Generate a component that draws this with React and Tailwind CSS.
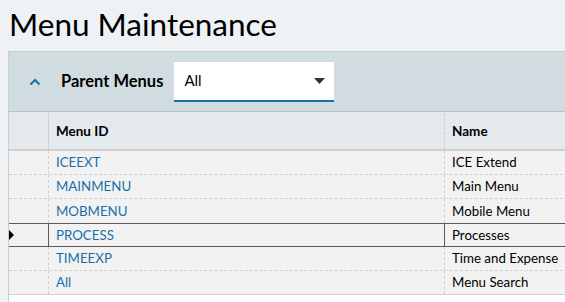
import React from 'react';

const rows = [
    { id: 'ICEEXT', name: 'ICE Extend' },
    { id: 'MAINMENU', name: 'Main Menu' },
    { id: 'MOBMENU', name: 'Mobile Menu' },
    { id: 'PROCESS', name: 'Processes', selected: true },
    { id: 'TIMEEXP', name: 'Time and Expense' },
    { id: 'All', name: 'Menu Search' },
];

export default function App() {
    return (
        <div className="w-[565px] h-[302px] overflow-hidden bg-[#eef2f5] text-[#111]" style={{ fontFamily: 'Lato, "Open Sans", sans-serif' }}>
            <h1 className="h-[51px] pl-[9px] pt-[4px] text-[31.5px] leading-[40px] font-normal text-black">Menu Maintenance</h1>

            <div className="ml-[8px] w-[600px] border-l border-t border-[#c9cdd0] bg-white">
                {/* Panel header */}
                <div className="h-[59px] bg-[#d0dce0] flex items-center">
                    <div className="w-[52px] flex justify-center">
                        <svg width="12" height="8" viewBox="0 0 12 8" fill="none">
                            <path d="M1.5 6.5 L6 2 L10.5 6.5" stroke="#1a6fa8" strokeWidth="2" />
                        </svg>
                    </div>
                    <span className="text-[16.5px] font-bold text-black">Parent Menus</span>
                    <div className="ml-[11px] w-[160px] h-[40px] bg-white border-b-2 border-[#1a6fa8] flex items-center justify-between pl-[10px] pr-[9px]">
                        <span className="text-[15px] text-black">All</span>
                        <svg width="11" height="6" viewBox="0 0 11 6">
                            <path d="M0 0 H11 L5.5 6 Z" fill="#333" />
                        </svg>
                    </div>
                </div>

                {/* Grid */}
                <div className="border-t border-[#b5c1c5]">
                    <div className="grid grid-cols-[40px_396px_1fr] h-[39px] pt-[1px] bg-[#e3e9ec] border-b-2 border-[#cfcfcf] text-[13.5px] font-bold text-black">
                        <div className="border-r border-[#cfcfcf]" />
                        <div className="flex items-center pl-[7px] border-r border-dashed border-[#cfcfcf]">Menu ID</div>
                        <div className="flex items-center pl-[7px]">Name</div>
                    </div>
                    {rows.map((row, i) => (
                        <div
                            key={row.id}
                            className={`grid grid-cols-[40px_396px_1fr] h-[24px] bg-[#f2f2f2] text-[13.3px] ${
                                row.selected
                                    ? 'border-y border-[#5a5a5a]'
                                    : i === rows.length - 1
                                        ? 'border-b border-[#cfcfcf]'
                                        : rows[i + 1]?.selected
                                            ? ''
                                            : 'border-b border-dashed border-[#cfcfcf]'
                            }`}
                        >
                            <div className={`flex items-center ${row.selected ? 'border-r border-[#5a5a5a]' : 'border-r border-dashed border-[#cfcfcf]'}`}>
                                {row.selected && (
                                    <svg width="5" height="10" viewBox="0 0 5 10">
                                        <path d="M0 0 L5 5 L0 10 Z" fill="#000" />
                                    </svg>
                                )}
                            </div>
                            <div className={`flex items-center pl-[7px] pt-[1px] text-[#1a6fa8] ${row.selected ? 'border-r border-[#5a5a5a]' : 'border-r border-dashed border-[#cfcfcf]'}`}>
                                {row.id}
                            </div>
                            <div className="flex items-center pl-[7px] pt-[1px] text-black">{row.name}</div>
                        </div>
                    ))}
                </div>
                <div className="h-[20px] bg-white" />
            </div>
        </div>
    );
}
